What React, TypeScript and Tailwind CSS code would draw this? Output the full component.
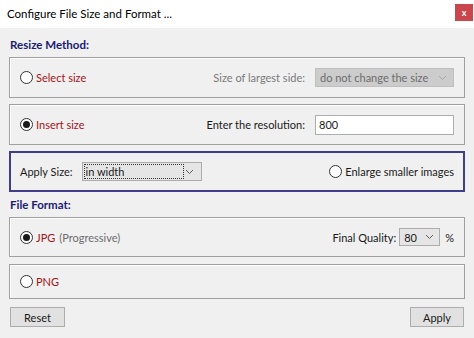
import React from 'react';

const Radio: React.FC<{ checked?: boolean }> = ({ checked }) => (
  <span className="w-[13px] h-[13px] rounded-full border border-[#333] bg-white flex items-center justify-center shrink-0 mr-[3px]">
    {checked && <span className="w-[7px] h-[7px] rounded-full bg-[#1a1a1a]" />}
  </span>
);

const Chevron: React.FC<{ color?: string }> = ({ color = '#606060' }) => (
  <svg width="9" height="6" viewBox="0 0 9 6" className="shrink-0">
    <path d="M1 1l3.5 3.5L8 1" fill="none" stroke={color} strokeWidth="1" />
  </svg>
);

const Box: React.FC<{ className?: string; children: React.ReactNode }> = ({ className = '', children }) => (
  <div className={`flex items-center border border-[#a0a0a0] shadow-[inset_1px_1px_0_#fff] pl-[10px] pr-[10px] ${className}`}>
    {children}
  </div>
);

const App: React.FC = () => {
  return (
    <div className="w-[474px] h-[338px] bg-[#f0f0f0] text-[11px] text-[#1a1a1a] font-['Lato',sans-serif] flex flex-col leading-none">
      {/* Title bar */}
      <div className="h-[28px] bg-white flex items-center justify-between pl-[7px] pr-[1px]">
        <span className="text-[11.5px] text-black">Configure File Size and Format ...</span>
        <div className="w-[18px] h-[17px] bg-[#c9474c] flex items-center justify-center text-white text-[9px] font-bold -mt-[3px]">x</div>
      </div>

      <div className="flex flex-col px-[9px]">
        {/* Resize Method */}
        <div className="h-[29px] flex items-center pt-[5px] pl-[1px] text-[11.5px] font-bold text-[#1b1b73]">Resize Method:</div>

        <Box className="h-[41px]">
          <Radio />
          <span className="text-[#a31419]">Select size</span>
          <span className="ml-auto mr-[10px] text-[#7a7a7a]">Size of largest side:</span>
          <div className="w-[139px] h-[19px] bg-[#cccccc] border border-[#bfbfbf] flex items-center justify-between pl-[4px] pr-[6px] text-[#6d6d6d]">
            <span>do not change the size</span>
            <Chevron color="#a8a8a8" />
          </div>
        </Box>

        <Box className="h-[41px] mt-[6px]">
          <Radio checked />
          <span className="text-[#a31419]">Insert size</span>
          <span className="ml-auto mr-[10px]">Enter the resolution:</span>
          <div className="w-[139px] h-[20px] bg-white border border-[#adadad] flex items-center pl-[3px]">800</div>
        </Box>

        <div className="h-[41px] mt-[6px] border-2 border-[#3e3e8a] flex items-center pl-[9px] pr-[9px]">
          <span>Apply Size:</span>
          <div className="ml-[9px] w-[120px] h-[19px] bg-[#e5e5e5] border border-[#acacac] flex items-center pl-[1px] pr-[7px]">
            <div className="w-[100px] h-[15px] border border-dotted border-[#333] flex items-center pl-[1px]">in width</div>
            <span className="ml-auto"><Chevron /></span>
          </div>
          <div className="ml-auto flex items-center">
            <Radio />
            <span>Enlarge smaller images</span>
          </div>
        </div>

        {/* File Format */}
        <div className="h-[25px] flex items-center pl-[1px] pt-[1px] text-[11.5px] font-bold text-[#1b1b73]">File Format:</div>

        <Box className="h-[40px]">
          <Radio checked />
          <span className="text-[#a31419]">JPG</span>
          <span className="ml-[4px] text-[#6d6d6d]">(Progressive)</span>
          <span className="ml-auto mr-[3px]">Final Quality:</span>
          <div className="w-[41px] h-[18px] bg-[#e5e5e5] border border-[#acacac] flex items-center justify-between pl-[4px] pr-[5px]">
            <span>80</span>
            <Chevron />
          </div>
          <span className="ml-[5px]">%</span>
        </Box>

        <Box className="h-[35px] mt-[7px]">
          <Radio />
          <span className="text-[#a31419]">PNG</span>
        </Box>

        <div className="flex justify-between mt-[8px] pl-[1px] pr-[1px]">
          <button className="w-[55px] h-[20px] bg-[#e1e1e1] border border-[#adadad] flex items-center justify-center">Reset</button>
          <button className="w-[54px] h-[20px] bg-[#e1e1e1] border border-[#adadad] flex items-center justify-center">Apply</button>
        </div>
      </div>
    </div>
  );
};

export default App;
